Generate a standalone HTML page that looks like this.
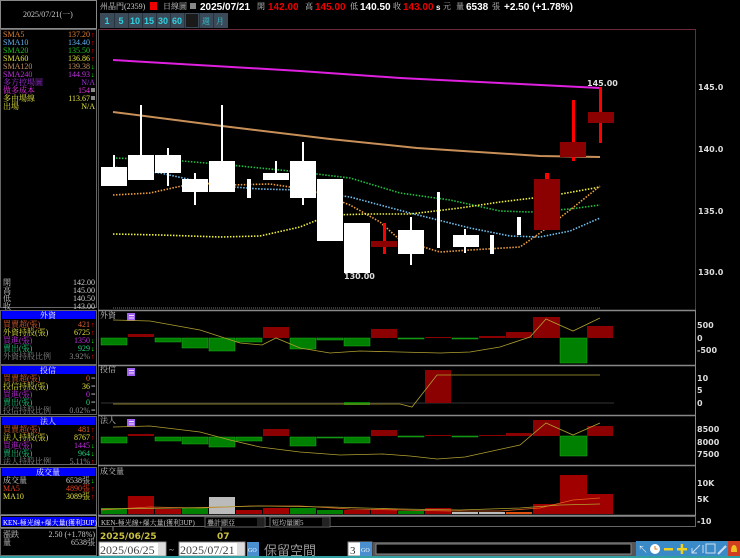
<!DOCTYPE html>
<html><head><meta charset="utf-8"><style>
html,body{margin:0;padding:0;background:#000;width:740px;height:558px;overflow:hidden}
svg{display:block;font-size:8px;font-family:"Liberation Serif","Noto Serif CJK SC",serif}
.b{font-family:"Liberation Sans","Noto Sans CJK TC",sans-serif;font-weight:bold}
.ax{font-family:"DejaVu Sans","Liberation Sans",sans-serif;fill:#ddd;font-weight:bold}
</style></head><body>
<svg width="740" height="558" viewBox="0 0 740 558" xmlns="http://www.w3.org/2000/svg" font-size="8">
<rect width="740" height="558" fill="#000"/>
<rect x="0.5" y="0.5" width="96" height="28" fill="#000" stroke="#888"/>
<text x="23" y="17" fill="#ccc">2025/07/21(一)</text>
<rect x="0.5" y="29.5" width="96" height="278" fill="none" stroke="#666"/>
<g>
<text x="3" y="37" fill="#e08030">SMA5</text><text x="3" y="45" fill="#60b0f0">SMA10</text><text x="3" y="53" fill="#20c020">SMA20</text><text x="3" y="61" fill="#e0e040">SMA60</text><text x="3" y="69" fill="#c09060">SMA120</text><text x="3" y="77" fill="#c030e0">SMA240</text>
<text x="3" y="85" fill="#a030e0">多方控場圖</text><text x="3" y="93" fill="#e030e0">做多成本</text><text x="3" y="101" fill="#e0e040">多由場線</text><text x="3" y="109" fill="#e0e040">出場</text>
</g>
<g text-anchor="end">
<text x="90" y="37" fill="#e08030">137.20</text><text x="90" y="45" fill="#60b0f0">134.40</text><text x="90" y="53" fill="#20c020">135.50</text><text x="90" y="61" fill="#e0e040">136.86</text><text x="90" y="69" fill="#c09060">139.38</text><text x="90" y="77" fill="#c030e0">144.93</text>
<text x="95" y="85" fill="#a030e0">N/A</text><text x="90" y="93" fill="#e030e0">154</text><text x="90" y="101" fill="#e0e040">113.67</text><text x="95" y="109" fill="#e0e040">N/A</text>
</g>
<text x="91" y="37" fill="#f00" font-size="7">↑</text><text x="91" y="45" fill="#f00" font-size="7">↑</text><text x="91" y="53" fill="#f00" font-size="7">↑</text><text x="91" y="61" fill="#f00" font-size="7">↑</text><text x="91" y="69" fill="#0f0" font-size="7">↓</text><text x="91" y="77" fill="#0f0" font-size="7">↓</text>
<rect x="91" y="88" width="4" height="4" fill="#888"/><rect x="91" y="96" width="4" height="4" fill="#888"/>
<g fill="#ccc"><text x="3" y="285">開</text><text x="3" y="293">高</text><text x="3" y="301">低</text><text x="3" y="309">收</text></g>
<g fill="#ccc" text-anchor="end"><text x="95" y="285">142.00</text><text x="95" y="293">145.00</text><text x="95" y="301">140.50</text><text x="95" y="309">143.00</text></g>
<g>
<rect x="0.5" y="310.5" width="96" height="54" fill="none" stroke="#666"/>
<rect x="2" y="311" width="93" height="8" fill="#0000ff"/><text x="48" y="318" fill="#fff" text-anchor="middle">外資</text>
<text x="3" y="327" fill="#e06030">買賣超(張)</text><text x="3" y="335" fill="#e0e040">外資持股(張)</text><text x="3" y="343" fill="#c030e0">買進(張)</text><text x="3" y="351" fill="#20d080">賣出(張)</text><text x="3" y="359" fill="#888">外資持股比例</text>
<g text-anchor="end"><text x="90" y="327" fill="#e06030">421</text><text x="90" y="335" fill="#e0e040">6725</text><text x="90" y="343" fill="#c030e0">1350</text><text x="90" y="351" fill="#20d080">929</text><text x="90" y="359" fill="#888">3.92%</text></g>
<text x="91" y="327" fill="#f00" font-size="7">↑</text><text x="91" y="335" fill="#f00" font-size="7">↑</text><text x="91" y="343" fill="#0f0" font-size="7">↓</text><text x="91" y="351" fill="#0f0" font-size="7">↓</text><text x="91" y="359" fill="#f00" font-size="7">↑</text>

<rect x="0.5" y="365.5" width="96" height="49" fill="none" stroke="#666"/>
<rect x="2" y="366" width="93" height="8" fill="#0000ff"/><text x="48" y="373" fill="#fff" text-anchor="middle">投信</text>
<text x="3" y="381" fill="#e06030">買賣超(張)</text><text x="3" y="389" fill="#e0e040">投信持股(張)</text><text x="3" y="397" fill="#c030e0">買進(張)</text><text x="3" y="405" fill="#20d080">賣出(張)</text><text x="3" y="413" fill="#888">投信持股比例</text>
<g text-anchor="end"><text x="90" y="381" fill="#e06030">0</text><text x="90" y="389" fill="#e0e040">36</text><text x="90" y="397" fill="#c030e0">0</text><text x="90" y="405" fill="#20d080">0</text><text x="90" y="413" fill="#888">0.02%</text></g>
<g fill="#ccc"><text x="91" y="381">=</text><text x="91" y="389">=</text><text x="91" y="397">=</text><text x="91" y="405">=</text><text x="91" y="413">=</text></g>

<rect x="0.5" y="416.5" width="96" height="48" fill="none" stroke="#666"/>
<rect x="2" y="417" width="93" height="8" fill="#0000ff"/><text x="48" y="424" fill="#fff" text-anchor="middle">法人</text>
<text x="3" y="432" fill="#e06030">買賣超(張)</text><text x="3" y="440" fill="#e0e040">法人持股(張)</text><text x="3" y="448" fill="#c030e0">買進(張)</text><text x="3" y="456" fill="#20d080">賣出(張)</text><text x="3" y="464" fill="#888">法人持股比例</text>
<g text-anchor="end"><text x="90" y="432" fill="#e06030">481</text><text x="90" y="440" fill="#e0e040">8767</text><text x="90" y="448" fill="#c030e0">1445</text><text x="90" y="456" fill="#20d080">964</text><text x="90" y="464" fill="#888">5.11%</text></g>
<text x="91" y="432" fill="#f00" font-size="7">↑</text><text x="91" y="440" fill="#f00" font-size="7">↑</text><text x="91" y="448" fill="#0f0" font-size="7">↓</text><text x="91" y="456" fill="#0f0" font-size="7">↓</text><text x="91" y="464" fill="#f00" font-size="7">↑</text>

<rect x="0.5" y="467.5" width="96" height="47" fill="none" stroke="#666"/>
<rect x="2" y="468" width="93" height="8" fill="#0000ff"/><text x="48" y="475" fill="#fff" text-anchor="middle">成交量</text>
<text x="3" y="483" fill="#ccc">成交量</text><text x="3" y="491" fill="#e04020">MA5</text><text x="3" y="499" fill="#e0e040">MA10</text>
<g text-anchor="end"><text x="90" y="483" fill="#ccc">6538張</text><text x="90" y="491" fill="#e04020">4890張</text><text x="90" y="499" fill="#e0e040">3089張</text></g>
<text x="91" y="483" fill="#0f0" font-size="7">↓</text><text x="91" y="491" fill="#f00" font-size="7">↑</text><text x="91" y="499" fill="#f00" font-size="7">↑</text>

<rect x="0.5" y="515.5" width="96" height="12" fill="#000" stroke="#888"/>
<rect x="2" y="517" width="93" height="9" fill="#0000ff"/><text x="3" y="525" fill="#fff" font-size="7">KEN-極光線+爆大量(獲利3UP)</text>
<rect x="0.5" y="528.5" width="96" height="27" fill="none" stroke="#666"/>
<text x="3" y="537" fill="#ccc">漲跌</text><text x="95" y="537" fill="#ccc" text-anchor="end">2.50 (+1.78%)</text>
<text x="3" y="545" fill="#ccc">量</text><text x="95" y="545" fill="#ccc" text-anchor="end">6538張</text>
</g>

<text x="100" y="9" fill="#ccc">州晶門(2359)</text>
<rect x="150" y="2" width="7" height="8" fill="#e00"/>
<text x="163" y="9" fill="#ccc">日線圖</text><rect x="190" y="3" width="6" height="6" fill="#888"/>
<text x="200" y="10" fill="#fff" class="b" font-size="10">2025/07/21</text>
<text x="257" y="9" fill="#ccc">開</text><text x="268" y="10" fill="#e00" class="b" font-size="10">142.00</text>
<text x="305" y="9" fill="#ccc">高</text><text x="315" y="10" fill="#e00" class="b" font-size="10">145.00</text>
<text x="350" y="9" fill="#ccc">低</text><text x="360" y="10" fill="#fff" class="b" font-size="10">140.50</text>
<text x="393" y="9" fill="#ccc">收</text><text x="403" y="10" fill="#e00" class="b" font-size="10">143.00</text>
<text x="436" y="10" fill="#fff" class="b" font-size="8">s</text><text x="443" y="9" fill="#ccc">元</text>
<text x="456" y="9" fill="#ccc">量</text><text x="466" y="10" fill="#fff" class="b" font-size="10">6538</text><text x="492" y="9" fill="#ccc">張</text>
<text x="504" y="10" fill="#fff" class="b" font-size="10">+2.50 (+1.78%)</text>
<g>
<rect x="100" y="13" width="128" height="15" fill="#3a4a58"/>
<g fill="#263440"><rect x="114" y="13" width="1" height="15"/><rect x="128" y="13" width="1" height="15"/><rect x="142" y="13" width="1" height="15"/><rect x="156" y="13" width="1" height="15"/><rect x="170" y="13" width="1" height="15"/><rect x="184" y="13" width="1" height="15"/><rect x="199" y="13" width="1" height="15"/><rect x="213" y="13" width="1" height="15"/></g>
<rect x="186" y="14" width="12" height="13" fill="#1a1a1a"/>
<g fill="#30d0e0" text-anchor="middle"><text x="107" y="24" class="b" font-size="9">1</text><text x="121" y="24" class="b" font-size="9">5</text><text x="135" y="24" class="b" font-size="9">10</text><text x="149" y="24" class="b" font-size="9">15</text><text x="163" y="24" class="b" font-size="9">30</text><text x="177" y="24" class="b" font-size="9">60</text></g>
<text x="206" y="24" fill="#30d0e0" text-anchor="middle">週</text><text x="220" y="24" fill="#30d0e0" text-anchor="middle">月</text>
</g>
<path d="M98 29.5H695.5V310" stroke="#6a2a3a" fill="none"/>
<line x1="98.5" y1="29" x2="98.5" y2="515" stroke="#555"/>
<text x="698" y="90" class="ax">145.0</text><text x="698" y="152" class="ax">140.0</text><text x="698" y="214" class="ax">135.0</text><text x="698" y="275" class="ax">130.0</text>
<polyline points="113,60 300,71 400,78 500,83 600,88" stroke="#e020e0" stroke-width="2" fill="none"/>
<polyline points="113,112 222,126 330,139 417,148 540,156 600,157" stroke="#c89058" stroke-width="2" fill="none"/>
<g fill="none" stroke-width="1.6" stroke-dasharray="1.5 1.5">
<polyline points="113,158 170,160 230,165 300,172 350,178 400,193 450,200 500,211 530,212 570,209 600,205" stroke="#20c040"/>
<polyline points="113,167 160,173 220,186 260,189 300,190 350,197 410,213 470,228 510,236 540,237 570,231 600,218" stroke="#70c0f0"/>
<polyline points="113,195 150,193 195,183 230,185 270,184 310,190 350,205 380,222 400,240 440,252 470,250 520,247 540,233 570,210 600,186" stroke="#f0a040"/>
<polyline points="113,234 160,235 220,237 260,236 300,227 330,215 370,214 410,214 460,208 500,202 550,196 600,187" stroke="#f0f040"/>
</g>
<g fill="#fff">
<rect x="113" y="155" width="2" height="12"/><rect x="101" y="167" width="26" height="19"/>
<rect x="140" y="105" width="2" height="50"/><rect x="128" y="155" width="26" height="25"/>
<rect x="167" y="148" width="2" height="38"/><rect x="155" y="155" width="26" height="18"/>
<rect x="194" y="173" width="2" height="32"/><rect x="182" y="179" width="26" height="13"/>
<rect x="221" y="105" width="2" height="56"/><rect x="209" y="161" width="26" height="31"/>
<rect x="247" y="179" width="4" height="19"/>
<rect x="275" y="161" width="2" height="12"/><rect x="263" y="173" width="26" height="7"/>
<rect x="302" y="142" width="2" height="63"/><rect x="290" y="161" width="26" height="37"/>
<rect x="317" y="179" width="26" height="62"/>
<rect x="344" y="223" width="26" height="50"/>
<rect x="410" y="217" width="2" height="48"/><rect x="398" y="230" width="26" height="24"/>
<rect x="437" y="192" width="3" height="56"/>
<rect x="464" y="229" width="2" height="24"/><rect x="453" y="235" width="26" height="12"/>
<rect x="490" y="235" width="4" height="19"/>
<rect x="517" y="217" width="4" height="18"/>
</g>
<rect x="383" y="223" width="3" height="31" fill="#f00"/><rect x="371" y="241" width="26" height="6" fill="#8b0000"/>
<rect x="545" y="173" width="4" height="7" fill="#f00"/><rect x="534" y="179" width="26" height="51" fill="#8b0000"/>
<rect x="572" y="100" width="3" height="61" fill="#f00"/><rect x="560" y="142" width="26" height="15" fill="#8b0000"/>
<rect x="599" y="87" width="3" height="56" fill="#f00"/><rect x="588" y="112" width="26" height="11" fill="#8b0000"/>
<text x="344" y="279" fill="#fff" class="ax">130.00</text>
<text x="587" y="86" fill="#fff" class="ax">145.00</text>
<line x1="113" y1="308" x2="600" y2="308" stroke="#8a7a30" stroke-dasharray="1 1"/>
<g stroke="#888" stroke-width="1.5">
<line x1="98" y1="310.5" x2="696" y2="310.5"/><line x1="98" y1="365.5" x2="696" y2="365.5"/><line x1="98" y1="415.5" x2="696" y2="415.5"/><line x1="98" y1="465.5" x2="696" y2="465.5"/><line x1="98" y1="515.5" x2="696" y2="515.5"/>
</g>
<line x1="695.5" y1="310" x2="695.5" y2="516" stroke="#888"/>
<g fill="#ccc"><text x="100" y="318">外資</text><text x="100" y="372">投信</text><text x="100" y="423">法人</text><text x="100" y="474">成交量</text></g>
<g fill="#a060f0"><rect x="127" y="313" width="8" height="8"/><rect x="127" y="368" width="8" height="8"/><rect x="127" y="419" width="8" height="8"/></g>
<g stroke="#fff" stroke-width="0.8"><line x1="129" y1="315.5" x2="134" y2="315.5"/><line x1="129" y1="318" x2="134" y2="318"/><line x1="129" y1="370.5" x2="134" y2="370.5"/><line x1="129" y1="373" x2="134" y2="373"/><line x1="129" y1="421.5" x2="134" y2="421.5"/><line x1="129" y1="424" x2="134" y2="424"/></g>
<g fill="#008000" stroke="#20b020" stroke-width="0.5">
<rect x="101" y="338" width="26" height="7"/><rect x="155" y="338" width="26" height="4"/><rect x="182" y="338" width="26" height="10"/><rect x="209" y="338" width="26" height="13"/><rect x="236" y="338" width="26" height="4"/><rect x="290" y="338" width="26" height="11"/><rect x="317" y="338" width="26" height="2"/><rect x="344" y="338" width="26" height="8"/><rect x="398" y="338" width="26" height="1"/><rect x="452" y="338" width="26" height="1"/><rect x="560" y="338" width="27" height="25"/>
</g>
<g fill="#8b0000">
<rect x="128" y="334" width="26" height="3"/><rect x="263" y="327" width="26" height="11"/><rect x="371" y="329" width="26" height="9"/><rect x="425" y="337" width="26" height="1"/><rect x="479" y="336" width="26" height="2"/><rect x="506" y="332" width="26" height="6"/><rect x="533" y="317" width="27" height="21"/><rect x="587" y="326" width="26" height="12"/>
</g>
<polyline points="113,320 150,321 200,330 240,343 262,345 276,338 300,348 330,353 360,351 400,352 440,353 470,352 500,347 530,337 546,319 573,331 600,318" fill="none" stroke="#b0a030" stroke-width="0.8"/>
<text x="697" y="328" class="ax">500</text><text x="697" y="341" class="ax">0</text><text x="697" y="353" class="ax">-500</text>
<line x1="101" y1="403" x2="614" y2="403" stroke="#333"/>
<rect x="344" y="402" width="26" height="3" fill="#008000"/>
<rect x="425" y="370" width="26" height="33" fill="#8b0000"/>
<polyline points="113,404 400,404 412,407 437,375 600,375" fill="none" stroke="#b0a030" stroke-width="0.8"/>
<text x="697" y="381" class="ax">10</text><text x="697" y="393" class="ax">5</text><text x="697" y="406" class="ax">0</text>
<g fill="#008000" stroke="#20b020" stroke-width="0.5">
<rect x="101" y="437" width="26" height="6"/><rect x="155" y="437" width="26" height="4"/><rect x="182" y="437" width="26" height="7"/><rect x="209" y="437" width="26" height="10"/><rect x="236" y="437" width="26" height="4"/><rect x="290" y="437" width="26" height="9"/><rect x="317" y="437" width="26" height="1"/><rect x="344" y="437" width="26" height="6"/><rect x="398" y="436" width="26" height="1"/><rect x="452" y="436" width="26" height="1"/><rect x="560" y="436" width="27" height="20"/>
</g>
<g fill="#8b0000">
<rect x="128" y="434" width="26" height="2"/><rect x="263" y="429" width="26" height="7"/><rect x="371" y="430" width="26" height="6"/><rect x="425" y="435" width="26" height="1"/><rect x="479" y="435" width="26" height="1"/><rect x="506" y="433" width="26" height="3"/><rect x="533" y="420" width="27" height="16"/><rect x="587" y="426" width="26" height="10"/>
</g>
<polyline points="113,427 150,426 200,432 230,440 260,447 300,452 340,455 383,454 410,456 437,459 465,457 520,445 546,423 573,435 600,423" fill="none" stroke="#b0a030" stroke-width="0.8"/>
<text x="697" y="432" class="ax">8500</text><text x="697" y="445" class="ax">8000</text><text x="697" y="457" class="ax">7500</text>
<g fill="#008000"><rect x="101" y="508" width="26" height="6"/><rect x="182" y="508" width="26" height="6"/><rect x="290" y="508" width="26" height="6"/><rect x="317" y="510" width="26" height="4"/><rect x="398" y="511" width="26" height="3"/></g>
<g fill="#a00000"><rect x="128" y="496" width="26" height="18"/><rect x="155" y="509" width="26" height="5"/><rect x="236" y="510" width="26" height="4"/><rect x="263" y="508" width="26" height="6"/><rect x="344" y="510" width="26" height="4"/><rect x="371" y="509" width="26" height="5"/><rect x="425" y="508" width="26" height="6"/><rect x="506" y="512" width="26" height="2" fill="#e05010"/><rect x="533" y="504" width="27" height="10"/><rect x="560" y="475" width="27" height="39"/><rect x="587" y="494" width="26" height="20"/></g>
<g fill="#bbb"><rect x="209" y="497" width="26" height="17"/><rect x="452" y="512" width="26" height="2"/><rect x="479" y="512" width="26" height="2"/></g>
<polyline points="101,510 150,507 200,508 250,506 300,506 350,509 400,510 450,511 500,511 540,508 573,500 600,498" fill="none" stroke="#e06020" stroke-width="0.8"/>
<polyline points="101,509 180,508 260,506 330,507 400,509 460,510 520,508 560,505 600,504" fill="none" stroke="#b0a030" stroke-width="0.8"/>
<text x="697" y="486" class="ax">10K</text><text x="697" y="502" class="ax">5K</text><text x="697" y="524" class="ax">-10</text>
<rect x="98.5" y="516.5" width="597" height="10" fill="none" stroke="#666"/>
<text x="101" y="525" fill="#ccc" font-size="7">KEN-極光線+爆大量(獲利3UP)</text>
<rect x="205" y="517" width="60" height="10" fill="#000" stroke="#666"/><text x="207" y="525" fill="#ccc" font-size="7">疊計顯亞</text><rect x="257" y="518" width="7" height="8" fill="#222"/>
<rect x="270" y="517" width="60" height="10" fill="#000" stroke="#666"/><text x="272" y="525" fill="#ccc" font-size="7">短均量圖5</text><rect x="322" y="518" width="7" height="8" fill="#222"/>
<line x1="113" y1="527" x2="113" y2="531" stroke="#888"/><line x1="221" y1="527" x2="221" y2="531" stroke="#888"/>
<text x="100" y="539" class="ax" font-size="9" style="fill:#c8c040">2025/06/25</text>
<text x="217" y="539" class="ax" font-size="9" style="fill:#c8c040">07</text>
<rect x="99" y="542" width="67" height="14" fill="#fff" stroke="#888"/><text x="100" y="554" fill="#444" font-size="12">2025/06/25</text><rect x="158" y="543" width="7" height="12" fill="#ddd"/>
<text x="169" y="553" fill="#ccc" font-size="9">~</text>
<rect x="179" y="542" width="66" height="14" fill="#fff" stroke="#888"/><text x="180" y="554" fill="#444" font-size="12">2025/07/21</text><rect x="237" y="543" width="7" height="12" fill="#ddd"/>
<rect x="247" y="542" width="12" height="14" fill="#4a90d0"/><text x="248" y="552" fill="#fff" font-size="6">GO</text>
<text x="264" y="555" fill="#999" font-size="13" style="font-family:'Noto Sans CJK TC',sans-serif">保留空間</text>
<rect x="348" y="542" width="24" height="14" fill="#fff" stroke="#888"/><text x="350" y="554" fill="#333" font-size="11">3</text>
<rect x="360" y="542" width="12" height="14" fill="#4a90d0"/><text x="361" y="552" fill="#fff" font-size="6">GO</text>
<rect x="373" y="542" width="263" height="14" fill="#555"/><rect x="376" y="544" width="255" height="10" fill="#000" stroke="#888"/>
<rect x="636" y="541" width="104" height="15" fill="#3a8ac8"/>
<text x="638" y="553" fill="#fff" font-size="10">↖</text>
<circle cx="655" cy="549" r="5" fill="#fff"/><path d="M655 546V549H657.5" stroke="#e08020" fill="none"/>
<rect x="664" y="548" width="9" height="2.5" fill="#f0d020"/>
<rect x="677" y="548" width="10" height="2.5" fill="#f0d020"/><rect x="680.7" y="544" width="2.5" height="10" fill="#f0d020"/>
<path d="M692 553L700 545M692 548V553H697M703 545V553" stroke="#cde" fill="none"/>
<rect x="706" y="544" width="9" height="9" fill="none" stroke="#cde"/>
<path d="M718 554L726 546" stroke="#cde" stroke-width="2"/>
<rect x="728" y="541" width="12" height="15" fill="#d04020"/><path d="M731 552Q731 545 734 545Q737 545 737 552Z" fill="#f0c020"/>
<rect x="0" y="556" width="740" height="2" fill="#30a0a0"/>
</svg>
</body></html>
